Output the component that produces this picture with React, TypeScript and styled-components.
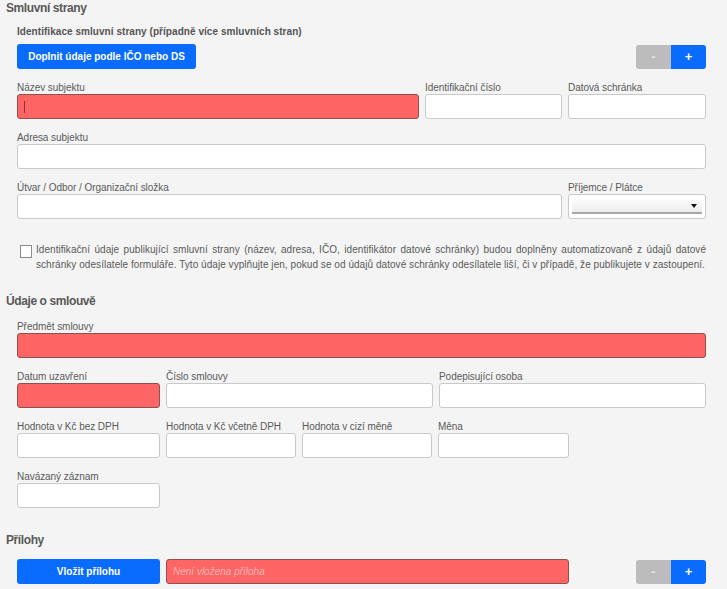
import React from "react";
import styled, { createGlobalStyle } from "styled-components";

const Global = createGlobalStyle`
  html, body {
    margin: 0;
    padding: 0;
    background: #f4f4f4;
  }
  body {
    font-family: "Liberation Sans", Arial, sans-serif;
    color: #555;
  }
`;

const Page = styled.div`
  padding: 0 21px 8px 6px;
`;

const SectionTitle = styled.h2<{ $top?: number }>`
  margin: ${(p) => p.$top ?? 0}px 0 0;
  font: bold 12px/16px "Liberation Sans", Arial, sans-serif;
  letter-spacing: -0.4px;
  color: #595959;
`;

const Section = styled.div`
  padding-left: 11px;
  display: flex;
  flex-direction: column;
`;

const SubTitle = styled.div`
  margin-top: 10px;
  font: bold 10px/12px "Liberation Sans", Arial, sans-serif;
  letter-spacing: 0.05px;
  color: #555;
`;

const ToolRow = styled.div<{ $top: number }>`
  display: flex;
  align-items: center;
  margin-top: ${(p) => p.$top}px;
  gap: 6px;
`;

const BlueButton = styled.button<{ $w: number }>`
  width: ${(p) => p.$w}px;
  height: 25px;
  border: none;
  border-radius: 3px;
  background: #0a6cff;
  color: #fff;
  font: bold 10px "Liberation Sans", Arial, sans-serif;
  letter-spacing: 0;
  padding: 0;
  cursor: pointer;
`;

const Stepper = styled.div`
  margin-left: auto;
  display: flex;
  height: 24px;
`;

const StepButton = styled.button<{ $plus?: boolean }>`
  width: 35px;
  height: 24px;
  border: none;
  padding: 0;
  color: ${(p) => (p.$plus ? "#fff" : "#e4e4e4")};
  background: ${(p) => (p.$plus ? "#0a6cff" : "#bcbcbc")};
  border-radius: ${(p) => (p.$plus ? "0 3px 3px 0" : "3px 0 0 3px")};
  font: bold 13px "Liberation Sans", Arial, sans-serif;
`;

const Row = styled.div<{ $cols: string; $top?: number }>`
  display: grid;
  grid-template-columns: ${(p) => p.$cols};
  column-gap: 6px;
  margin-top: ${(p) => p.$top ?? 12}px;
`;

const Field = styled.label`
  display: flex;
  flex-direction: column;
  min-width: 0;
`;

const Label = styled.span`
  font-size: 10px;
  line-height: 13px;
  letter-spacing: -0.05px;
  color: #5a5a5a;
  white-space: nowrap;
`;

const Input = styled.div<{ $err?: boolean }>`
  box-sizing: border-box;
  height: 25px;
  border: 1px solid ${(p) => (p.$err ? "#8f5050" : "#c9c9c9")};
  border-radius: 3px;
  background: ${(p) => (p.$err ? "#ff6565" : "#fff")};
  display: flex;
  align-items: center;
  padding-left: 6px;
`;

const Caret = styled.span`
  width: 1px;
  height: 12px;
  background: #7a3a3a;
`;

const SelectBox = styled.div`
  box-sizing: border-box;
  height: 25px;
  border: 1px solid #c9c9c9;
  border-radius: 3px;
  background: #fff;
  padding: 4px 3px 0;
`;

const SelectInner = styled.div`
  position: relative;
  height: 13px;
  background: linear-gradient(#fdfdfd, #ececec);
  border-bottom: 2px solid #a8a8a8;
  &::after {
    content: "";
    position: absolute;
    right: 5px;
    top: 5px;
    border-left: 3.5px solid transparent;
    border-right: 3.5px solid transparent;
    border-top: 4px solid #111;
  }
`;

const Note = styled.div`
  display: flex;
  gap: 4px;
  margin-top: 23px;
  padding-left: 3px;
`;

const CheckBox = styled.span`
  flex: none;
  box-sizing: border-box;
  width: 12px;
  height: 13px;
  margin-top: 3px;
  border: 1px solid #8a8a8a;
  background: #fff;
`;

const NoteText = styled.p`
  margin: 0;
  font-size: 10px;
  line-height: 15px;
  letter-spacing: 0.05px;
  text-align: justify;
  color: #5a5a5a;
`;

const Placeholder = styled.span`
  font: italic 10px "Liberation Sans", Arial, sans-serif;
  color: #f3b4b4;
`;

export default function App() {
  return (
    <Page>
      <Global />
      <SectionTitle>Smluvní strany</SectionTitle>
      <Section>
        <SubTitle>Identifikace smluvní strany (případně více smluvních stran)</SubTitle>
        <ToolRow $top={6}>
          <BlueButton $w={179}>Doplnit údaje podle IČO nebo DS</BlueButton>
          <Stepper>
            <StepButton>-</StepButton>
            <StepButton $plus>+</StepButton>
          </Stepper>
        </ToolRow>
        <Row $cols="402px 137px 1fr">
          <Field>
            <Label>Název subjektu</Label>
            <Input $err>
              <Caret />
            </Input>
          </Field>
          <Field>
            <Label>Identifikační číslo</Label>
            <Input />
          </Field>
          <Field>
            <Label>Datová schránka</Label>
            <Input />
          </Field>
        </Row>
        <Row $cols="1fr">
          <Field>
            <Label>Adresa subjektu</Label>
            <Input />
          </Field>
        </Row>
        <Row $cols="1fr 138px">
          <Field>
            <Label>Útvar / Odbor / Organizační složka</Label>
            <Input />
          </Field>
          <Field>
            <Label>Příjemce / Plátce</Label>
            <SelectBox>
              <SelectInner />
            </SelectBox>
          </Field>
        </Row>
        <Note>
          <CheckBox />
          <NoteText>
            Identifikační údaje publikující smluvní strany (název, adresa, IČO, identifikátor datové
            schránky) budou doplněny automatizovaně z údajů datové schránky odesílatele formuláře. Tyto
            údaje vyplňujte jen, pokud se od údajů datové schránky odesílatele liší, či v případě, že
            publikujete v zastoupení.
          </NoteText>
        </Note>
      </Section>

      <SectionTitle $top={21}>Údaje o smlouvě</SectionTitle>
      <Section>
        <Row $cols="1fr" $top={11}>
          <Field>
            <Label>Předmět smlouvy</Label>
            <Input $err />
          </Field>
        </Row>
        <Row $cols="143px 1fr 1fr">
          <Field>
            <Label>Datum uzavření</Label>
            <Input $err />
          </Field>
          <Field>
            <Label>Číslo smlouvy</Label>
            <Input />
          </Field>
          <Field>
            <Label>Podepisující osoba</Label>
            <Input />
          </Field>
        </Row>
        <Row $cols="143px 130px 130px 131px">
          <Field>
            <Label>Hodnota v Kč bez DPH</Label>
            <Input />
          </Field>
          <Field>
            <Label>Hodnota v Kč včetně DPH</Label>
            <Input />
          </Field>
          <Field>
            <Label>Hodnota v cizí měně</Label>
            <Input />
          </Field>
          <Field>
            <Label>Měna</Label>
            <Input />
          </Field>
        </Row>
        <Row $cols="143px">
          <Field>
            <Label>Navázaný záznam</Label>
            <Input />
          </Field>
        </Row>
      </Section>

      <SectionTitle $top={24}>Přílohy</SectionTitle>
      <Section>
        <ToolRow $top={11}>
          <BlueButton $w={143}>Vložit přílohu</BlueButton>
          <Input $err style={{ width: 403 }}>
            <Placeholder>Není vložena příloha</Placeholder>
          </Input>
          <Stepper>
            <StepButton>-</StepButton>
            <StepButton $plus>+</StepButton>
          </Stepper>
        </ToolRow>
      </Section>
    </Page>
  );
}
